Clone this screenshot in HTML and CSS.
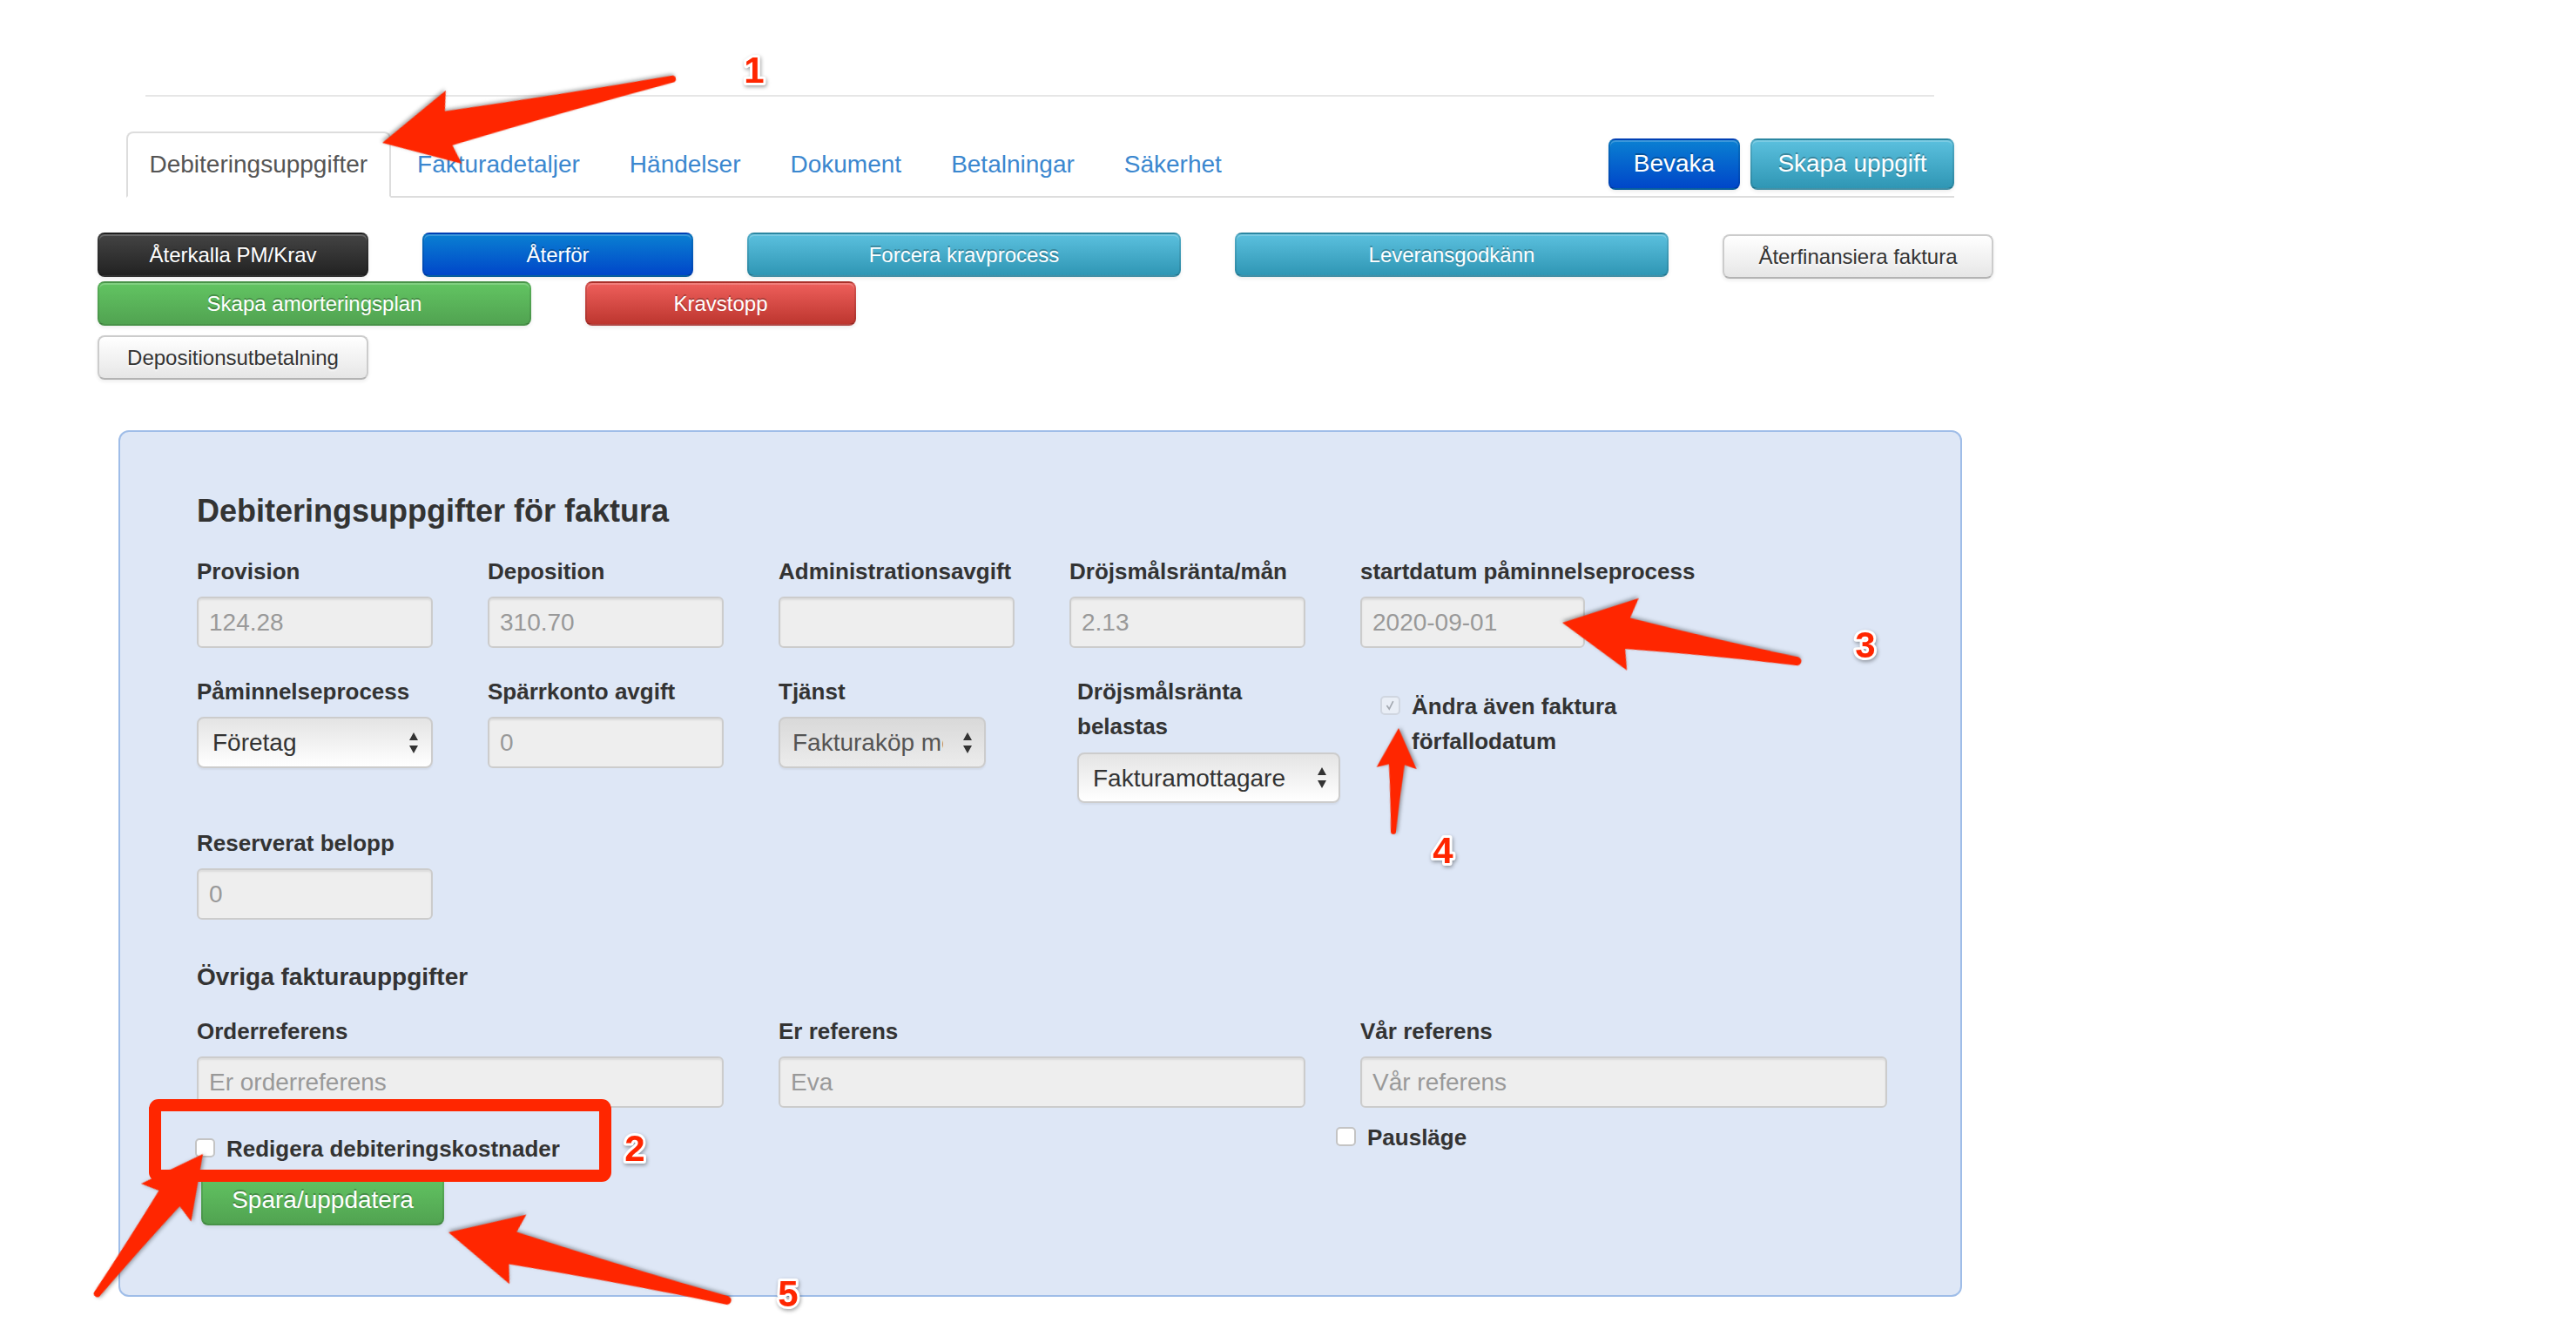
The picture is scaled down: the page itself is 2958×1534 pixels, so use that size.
FILE: index.html
```html
<!DOCTYPE html>
<html lang="sv">
<head>
	<meta charset="UTF-8">
	<title>Debiteringsuppgifter</title>
<link rel="stylesheet" href="styles.css">
</head>
<body>
<div class="page">
	<div class="topline"></div>

	<div class="tabbar">
		<ul class="tabs">
			<li class="active"><a href="#">Debiteringsuppgifter</a></li>
			<li><a href="#">Fakturadetaljer</a></li>
			<li><a href="#">Händelser</a></li>
			<li><a href="#">Dokument</a></li>
			<li><a href="#">Betalningar</a></li>
			<li><a href="#">Säkerhet</a></li>
		</ul>
		<div class="tab_actions">
			<button class="btn btn_primary w_bevaka">Bevaka</button>
			<button class="btn btn_info w_uppgift">Skapa uppgift</button>
		</div>
	</div>

	<div class="btn_rows">
		<div class="btn_row">
			<button class="btn btn_small btn_inverse w_s">Återkalla PM/Krav</button>
			<button class="btn btn_small btn_primary w_s">Återför</button>
			<button class="btn btn_small btn_info w_l">Forcera kravprocess</button>
			<button class="btn btn_small btn_info w_l">Leveransgodkänn</button>
			<button class="btn btn_small btn_default w_s low">Återfinansiera faktura</button>
		</div>
		<div class="btn_row second">
			<button class="btn btn_small btn_success w_l">Skapa amorteringsplan</button>
			<button class="btn btn_small btn_danger w_s">Kravstopp</button>
		</div>
		<div class="btn_row third">
			<button class="btn btn_small btn_default w_s">Depositionsutbetalning</button>
		</div>
	</div>

	<div class="panel">
		<h4>Debiteringsuppgifter för faktura</h4>

		<div class="row">
			<div class="field">
				<label>Provision</label>
				<input class="input" type="text" value="124.28" disabled>
			</div>
			<div class="field">
				<label>Deposition</label>
				<input class="input" type="text" value="310.70" disabled>
			</div>
			<div class="field">
				<label>Administrationsavgift</label>
				<input class="input" type="text" value="" disabled>
			</div>
			<div class="field">
				<label>Dröjsmålsränta/mån</label>
				<input class="input" type="text" value="2.13" disabled>
			</div>
			<div class="field">
				<label>startdatum påminnelseprocess</label>
				<input class="input date" type="text" value="2020-09-01" disabled>
			</div>
		</div>

		<div class="row tight">
			<div class="field">
				<label>Påminnelseprocess</label>
				<div class="select">
					<select><option>Företag</option></select>
					<svg viewBox="0 0 12 26"><path d="M6 1 L11 10 L1 10 Z M1 16 L11 16 L6 25 Z"/></svg>
				</div>
			</div>
			<div class="field">
				<label>Spärrkonto avgift</label>
				<input class="input" type="text" value="0" disabled>
			</div>
			<div class="field">
				<label>Tjänst</label>
				<div class="select disabled tjanst">
					<select disabled><option>Fakturaköp med regress</option></select>
					<svg viewBox="0 0 12 26"><path d="M6 1 L11 10 L1 10 Z M1 16 L11 16 L6 25 Z"/></svg>
				</div>
			</div>
			<div class="field belast">
				<label class="wrap">Dröjsmålsränta belastas</label>
				<div class="select mottagare">
					<select><option>Fakturamottagare</option></select>
					<svg viewBox="0 0 12 26"><path d="M6 1 L11 10 L1 10 Z M1 16 L11 16 L6 25 Z"/></svg>
				</div>
			</div>
			<label class="check andra">
				<span class="box checked"><svg viewBox="0 0 22 22"><path d="M6 11 L9.5 16 L15 5"/></svg></span>
				<span class="check_text">Ändra även faktura förfallodatum</span>
			</label>
		</div>

		<div class="row">
			<div class="field">
				<label>Reserverat belopp</label>
				<input class="input" type="text" value="0" disabled>
			</div>
		</div>

		<h5>Övriga fakturauppgifter</h5>

		<div class="row refs">
			<div class="field span2">
				<label>Orderreferens</label>
				<input class="input" type="text" placeholder="Er orderreferens" disabled>
			</div>
			<div class="field span2">
				<label>Er referens</label>
				<input class="input" type="text" value="Eva" disabled>
			</div>
			<div class="field span2">
				<label>Vår referens</label>
				<input class="input" type="text" placeholder="Vår referens" disabled>
			</div>
		</div>

		<div class="row checks">
			<label class="check redigera"><span class="box"></span>Redigera debiteringskostnader</label>
			<label class="check paus"><span class="box"></span>Pausläge</label>
		</div>

		<button class="btn btn_success w_spara">Spara/uppdatera</button>
	</div>

	<!-- markeringar ovanpå skärmbilden -->
	<svg class="notes" viewBox="0 0 2958 1534">
		<g class="arrow" transform="translate(439 164) rotate(167.6)">
			<path d="M0,0 L-84,-43 L-78,-20 Q-212,-10 -341,-4 A4,4 0 0 0 -341,4 Q-212,10 -78,20 L-84,43 Z"/>
		</g>
		<g class="arrow" transform="translate(1794 715) rotate(-170.7)">
			<path d="M0,0 L-82,-42 L-76,-18 Q-178,-9 -273,-5 A5,5 0 0 0 -273,5 Q-178,9 -76,18 L-82,42 Z"/>
		</g>
		<g class="arrow" transform="translate(1606 836) rotate(-87.1)">
			<path d="M0,0 L-46,-23 L-42,-9 Q-83,-5 -119,-3 A3,3 0 0 0 -119,3 Q-83,5 -42,9 L-46,23 Z"/>
		</g>
		<g class="arrow" transform="translate(515 1415) rotate(-166.3)">
			<path d="M0,0 L-82,-41 L-76,-19 Q-206,-9 -329,-5 A5,5 0 0 0 -329,5 Q-206,9 -76,19 L-82,41 Z"/>
		</g>
		<g class="arrow" transform="translate(233 1325) rotate(-52.9)">
			<path d="M0,0 L-70,-36 L-64,-15 Q-136,-8 -201,-4 A4,4 0 0 0 -201,4 Q-136,8 -64,15 L-70,36 Z"/>
		</g>
		<rect class="mark_box" x="178" y="1269" width="517" height="81" rx="4"/>
		<text class="num" x="866" y="80">1</text>
		<text class="num" x="729" y="1318">2</text>
		<text class="num" x="2142" y="740">3</text>
		<text class="num" x="1657" y="976">4</text>
		<text class="num" x="905" y="1485">5</text>
	</svg>
</div>
</body>
</html>
```

FILE: styles.css
```css
*{
	box-sizing: border-box;
}
body{
	margin: 0;
	background: #fff;
	color: #333;
	font-family: "Liberation Sans", Arial, Helvetica, sans-serif;
	font-size: 28px;
	line-height: 40px;
}
.page{
	position: relative;
	width: 2958px;
	height: 1534px;
	overflow: hidden;
}
.topline{
	width: 2054px;
	height: 2px;
	margin: 109px 0 0 167px;
	background: #e6e6e6;
}

/* flikar */
.tabbar{
	width: 2099px;
	margin: 40px 0 0 145px;
	display: flex;
	align-items: center;
	border-bottom: 2px solid #ddd;
}
.tabs{
	display: flex;
	list-style: none;
	margin: 0 0 -2px 0;
	padding: 0;
	align-self: flex-end;
}
.tabs li{
	margin-right: 4px;
}
.tabs a{
	display: block;
	padding: 16px 24.5px;
	border: 2px solid transparent;
	border-radius: 8px 8px 0 0;
	color: #3b87cf;
	text-decoration: none;
	white-space: nowrap;
}
.tabs .active a{
	color: #555;
	background: #fff;
	border-color: #ddd #ddd #fff;
}
.tab_actions{
	margin-left: auto;
	display: flex;
	gap: 12px;
}

/* knappar */
.btn{
	display: block;
	height: 59px;
	padding: 0;
	font-family: inherit;
	font-size: 28px;
	line-height: 40px;
	color: #fff;
	text-align: center;
	white-space: nowrap;
	text-shadow: 0 -2px 0 rgba(0,0,0,.25);
	border: 2px solid rgba(0,0,0,.1);
	border-bottom-color: rgba(0,0,0,.25);
	border-radius: 8px;
	box-shadow: inset 0 2px 0 rgba(255,255,255,.2), 0 2px 4px rgba(0,0,0,.08);
	cursor: pointer;
}
.btn_primary{
	background: linear-gradient(#0a80d2, #0046c9);
}
.btn_info{
	background: linear-gradient(#5bc0de, #2f96b4);
}
.btn_success{
	background: linear-gradient(#62c462, #51a351);
}
.btn_danger{
	background: linear-gradient(#ee5f5b, #bd362f);
}
.btn_inverse{
	background: linear-gradient(#444, #222);
}
.btn_default{
	color: #333;
	text-shadow: 0 2px 2px rgba(255,255,255,.75);
	background: linear-gradient(#fff, #e6e6e6);
	border-color: #ccc #ccc #b3b3b3;
}
.btn_small{
	height: 51px;
	font-size: 24px;
}
.w_bevaka{ width: 151px; }
.w_uppgift{ width: 234px; }
.w_s{ width: 311px; }
.w_l{ width: 498px; }
.w_spara{
	width: 279px;
	height: 58px;
	margin: 10px 0 0 5px;
}

.btn_rows{
	margin: 40px 0 0 112px;
}
.btn_row{
	display: flex;
	gap: 62px;
	align-items: flex-start;
}
.btn_row .low{
	margin-top: 2px;
}
.btn_row.second{
	margin-top: 3px;
}
.btn_row.third{
	margin-top: 11px;
}

/* panel */
.panel{
	width: 2117px;
	margin: 58px 0 0 136px;
	padding: 71px 0 80px 88px;
	background: #dee7f6;
	border: 2px solid #9fbde8;
	border-radius: 12px;
}
.panel h4{
	margin: 0 0 29px;
	font-size: 36px;
	line-height: 40px;
	font-weight: bold;
}
.panel h5{
	margin: 46px 0 22px;
	font-size: 28px;
	line-height: 40px;
	font-weight: bold;
}
.row{
	display: grid;
	grid-template-columns: repeat(6, 271px);
	column-gap: 63px;
	align-items: start;
	margin-bottom: 30px;
}
.row.tight{
	margin-bottom: 26px;
}
.row.refs,
.row.checks{
	margin-bottom: 0;
}
.field label{
	display: block;
	margin-bottom: 9px;
	font-size: 26px;
	line-height: 40px;
	font-weight: bold;
	white-space: nowrap;
}
.field label.wrap{
	white-space: normal;
	width: 262px;
}
.span2{
	grid-column: span 2;
}
.input{
	display: block;
	width: 100%;
	height: 59px;
	margin: 0;
	padding: 0 12px;
	font-family: inherit;
	font-size: 28px;
	color: #999;
	background: #eee;
	border: 2px solid #ccc;
	border-radius: 6px;
	box-shadow: inset 0 2px 2px rgba(0,0,0,.075);
}
.input::placeholder{
	color: #999;
}
.input.date{
	width: 258px;
}

.select{
	display: flex;
	align-items: center;
	width: 271px;
	height: 59px;
	padding: 0 14px 0 16px;
	background: linear-gradient(#e4e4e4, #fff);
	border: 2px solid #ccc;
	border-radius: 8px;
	box-shadow: 0 2px 2px rgba(0,0,0,.05);
}
.select select{
	flex: 1;
	min-width: 0;
	margin: 0;
	padding: 0;
	appearance: none;
	-webkit-appearance: none;
	border: 0;
	background: transparent;
	font-family: inherit;
	font-size: 28px;
	color: #333;
	outline: none;
}
.select svg{
	flex: none;
	width: 12px;
	height: 26px;
	fill: #333;
}
.select.disabled{
	background: linear-gradient(#d9d9d9, #ececec);
}
.select.disabled select{
	color: #555;
	opacity: 1;
}
.select.tjanst{
	width: 238px;
	padding: 0 13px 0 14px;
}
.select.tjanst select{
	margin-right: 22px;
}
.belast{
	margin-left: 9px;
}
.belast label{
	margin-bottom: 10px;
}
.select.mottagare{
	width: 302px;
	height: 58px;
	padding-right: 13px;
}

/* kryssrutor */
.check{
	display: flex;
	align-items: flex-start;
	font-size: 26px;
	line-height: 40px;
	font-weight: bold;
	white-space: nowrap;
}
.box{
	flex: none;
	width: 23px;
	height: 22px;
	margin: 8px 13px 0 0;
	background: #fff;
	border: 2px solid #c4c4c4;
	border-radius: 5px;
}
.box.checked{
	background: #e9eef6;
	border-color: #d0d6e0;
}
.box svg{
	display: block;
	width: 19px;
	height: 18px;
	fill: none;
	stroke: #a3a8b0;
	stroke-width: 2;
}
.check.andra{
	padding: 17px 0 0 23px;
}
.check_text{
	flex: none;
	white-space: normal;
	width: 300px;
}
.check.redigera{
	grid-column: 1 / span 3;
	margin: 27px 0 0 -2px;
}
.check.paus{
	grid-column: 5 / span 2;
	margin: 14px 0 0 -28px;
}

/* markeringar */
.notes{
	position: absolute;
	left: 0;
	top: 0;
	width: 2958px;
	height: 1534px;
	pointer-events: none;
}
.arrow path{
	fill: #ff2600;
	filter: drop-shadow(1px 2px 2px rgba(0,0,0,.35));
}
.mark_box{
	fill: none;
	stroke: #ff2600;
	stroke-width: 14;
}
.num{
	font-family: "Liberation Sans", Arial, sans-serif;
	font-size: 42px;
	font-weight: bold;
	fill: #ff2600;
	stroke: #fff;
	stroke-width: 6px;
	stroke-linejoin: round;
	paint-order: stroke;
	text-anchor: middle;
	dominant-baseline: central;
	filter: drop-shadow(1px 2px 2px rgba(0,0,0,.35));
}
```
